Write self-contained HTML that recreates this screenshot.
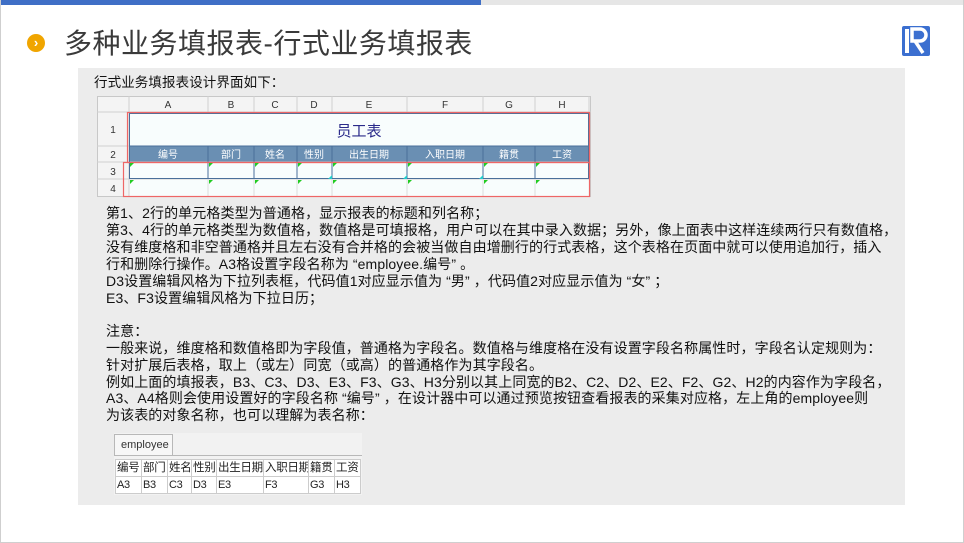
<!DOCTYPE html>
<html><head><meta charset="utf-8"><style>
*{margin:0;padding:0;box-sizing:border-box}
body{width:964px;height:543px;position:relative;background:#fff;overflow:hidden;font-family:"Liberation Sans","Noto Sans CJK SC",sans-serif}
.frame{position:absolute;left:0;top:0;width:964px;height:543px;border:1px solid #cfcfcf;border-top:none}
.topbar{position:absolute;left:0;top:0;width:964px;height:5px;background:#e6e6e6}
.topbar i{position:absolute;left:0;top:0;width:481px;height:5px;background:#3f6fc6}
.title{position:absolute;left:64px;top:22px;font-size:28px;color:#3a3a3a;white-space:nowrap;letter-spacing:0.5px}
.bullet{position:absolute;left:27px;top:34px;width:18px;height:18px;border-radius:50%;background:#f0a500;color:#fff;font-size:13px;font-weight:bold;text-align:center;line-height:18px}
.logo{position:absolute;left:902px;top:26px;width:28px;height:30px;background:#3b6fd0;border-radius:2px}
.panel{position:absolute;left:78px;top:68px;width:827px;height:437px;background:#ececec}
.t{position:absolute;white-space:nowrap;font-size:14px;color:#111;letter-spacing:0.1px;line-height:17px}
.sheet{position:absolute;left:97px;top:96px;width:494px;height:101px;background:#f4f4f4;border:1px solid #c8c8c8}
table{border-collapse:collapse;table-layout:fixed}
td{border:1px solid #ccc;white-space:nowrap;overflow:hidden;padding:0 1px;line-height:15px}
</style></head><body>
<div class="topbar"><i></i></div>
<div class="frame"></div>
<div class="bullet">›</div>
<div class="title">多种业务填报表-行式业务填报表</div>
<div class="logo"><svg width="28" height="30"><rect x="3" y="3" width="4" height="24" fill="#fff"/><path d="M10 3h8a6 6 0 0 1 0 12h-8zM13 15l8 12" fill="none" stroke="#fff" stroke-width="3.5"/></svg></div>
<div class="panel"></div>
<div class="t" style="left:94px;top:74px;font-size:13.5px">行式业务填报表设计界面如下：</div>

<div class="sheet"></div>
<svg style="position:absolute;left:97px;top:96px" width="495" height="102">
<g font-family="Liberation Sans" font-size="10" fill="#333" text-anchor="middle">
<rect x="32" y="16" width="460" height="34" fill="#f8fdfd"/>
<rect x="32" y="50" width="460" height="16" fill="#6a8fb3"/>
<rect x="32" y="66" width="460" height="34" fill="#f8fdfd"/>
<g stroke="#d0d0d0" stroke-width="1">
<line x1="32" y1="0" x2="32" y2="101"/><line x1="0" y1="16" x2="494" y2="16"/>
<line x1="0" y1="50" x2="32" y2="50"/><line x1="0" y1="66" x2="494" y2="66"/><line x1="0" y1="83" x2="494" y2="83"/>
<line x1="111" y1="0" x2="111" y2="16"/><line x1="157" y1="0" x2="157" y2="16"/><line x1="200" y1="0" x2="200" y2="16"/><line x1="235" y1="0" x2="235" y2="16"/><line x1="310" y1="0" x2="310" y2="16"/><line x1="386" y1="0" x2="386" y2="16"/><line x1="438" y1="0" x2="438" y2="16"/><line x1="492" y1="0" x2="492" y2="16"/>
</g>
<g stroke="#4a6f9a" stroke-width="1" fill="none">
<rect x="32.5" y="17.5" width="459" height="65"/>
<line x1="32" y1="50" x2="492" y2="50"/>
<line x1="111" y1="50" x2="111" y2="83"/><line x1="157" y1="50" x2="157" y2="83"/><line x1="200" y1="50" x2="200" y2="83"/><line x1="235" y1="50" x2="235" y2="83"/><line x1="310" y1="50" x2="310" y2="83"/><line x1="386" y1="50" x2="386" y2="83"/><line x1="438" y1="50" x2="438" y2="83"/>
</g>
<g stroke="#ddd"><line x1="111" y1="83" x2="111" y2="100"/><line x1="157" y1="83" x2="157" y2="100"/><line x1="200" y1="83" x2="200" y2="100"/><line x1="235" y1="83" x2="235" y2="100"/><line x1="310" y1="83" x2="310" y2="100"/><line x1="386" y1="83" x2="386" y2="100"/><line x1="438" y1="83" x2="438" y2="100"/></g>
<rect x="30.5" y="16.5" width="462" height="50" fill="none" stroke="#e66" stroke-width="1.2"/>
<rect x="26.5" y="66.5" width="466" height="34" fill="none" stroke="#e66" stroke-width="1.2"/>
<text x="71" y="12">A</text><text x="134" y="12">B</text><text x="178" y="12">C</text><text x="217" y="12">D</text><text x="272" y="12">E</text><text x="348" y="12">F</text><text x="412" y="12">G</text><text x="465" y="12">H</text>
<text x="16" y="37">1</text><text x="16" y="62">2</text><text x="16" y="79">3</text><text x="16" y="96">4</text>
<text x="262" y="40" font-size="15" fill="#2a2a8a" font-family="Noto Sans CJK SC">员工表</text>
<g fill="#fff" font-family="Noto Sans CJK SC" font-size="10">
<text x="71" y="62">编号</text><text x="134" y="62">部门</text><text x="178" y="62">姓名</text><text x="217" y="62">性别</text><text x="272" y="62">出生日期</text><text x="348" y="62">入职日期</text><text x="412" y="62">籍贯</text><text x="465" y="62">工资</text>
</g>
<g fill="#2c2">
<path d="M33 67h4l-4 4z"/><path d="M112 67h4l-4 4z"/><path d="M158 67h4l-4 4z"/><path d="M201 67h4l-4 4z"/><path d="M236 67h4l-4 4z"/><path d="M311 67h4l-4 4z"/><path d="M387 67h4l-4 4z"/><path d="M439 67h4l-4 4z"/>
<path d="M33 84h4l-4 4z"/><path d="M112 84h4l-4 4z"/><path d="M158 84h4l-4 4z"/><path d="M201 84h4l-4 4z"/><path d="M236 84h4l-4 4z"/><path d="M311 84h4l-4 4z"/><path d="M387 84h4l-4 4z"/><path d="M439 84h4l-4 4z"/>
</g>
<g fill="#2cc"><path d="M235 83v-4l-4 4z"/><path d="M310 83v-4l-4 4z"/><path d="M386 83v-4l-4 4z"/></g>
</g></svg>

<div class="t" style="left:106px;top:205px">第1、2行的单元格类型为普通格，显示报表的标题和列名称；</div>
<div class="t" style="left:106px;top:222px">第3、4行的单元格类型为数值格，数值格是可填报格，用户可以在其中录入数据；另外，像上面表中这样连续两行只有数值格，</div>
<div class="t" style="left:106px;top:239px">没有维度格和非空普通格并且左右没有合并格的会被当做自由增删行的行式表格，这个表格在页面中就可以使用追加行，插入</div>
<div class="t" style="left:106px;top:256px">行和删除行操作。A3格设置字段名称为 “employee.编号” 。</div>
<div class="t" style="left:106px;top:273px">D3设置编辑风格为下拉列表框，代码值1对应显示值为 “男” ，代码值2对应显示值为 “女” ；</div>
<div class="t" style="left:106px;top:290px">E3、F3设置编辑风格为下拉日历；</div>
<div class="t" style="left:106px;top:323px">注意：</div>
<div class="t" style="left:106px;top:340px">一般来说，维度格和数值格即为字段值，普通格为字段名。数值格与维度格在没有设置字段名称属性时，字段名认定规则为：</div>
<div class="t" style="left:106px;top:357px">针对扩展后表格，取上（或左）同宽（或高）的普通格作为其字段名。</div>
<div class="t" style="left:106px;top:374px">例如上面的填报表，B3、C3、D3、E3、F3、G3、H3分别以其上同宽的B2、C2、D2、E2、F2、G2、H2的内容作为字段名，</div>
<div class="t" style="left:106px;top:390px">A3、A4格则会使用设置好的字段名称 “编号” ，在设计器中可以通过预览按钮查看报表的采集对应格，左上角的employee则</div>
<div class="t" style="left:106px;top:407px">为该表的对象名称，也可以理解为表名称：</div>

<div style="position:absolute;left:114px;top:433px;width:248px;height:62px;background:#f2f2f2"></div>
<div style="position:absolute;left:114px;top:434px;width:59px;height:22px;background:#f7f7f7;border:1px solid #b8b8b8;border-bottom:none;font-size:11px;color:#333;padding:4px 0 0 6px;font-family:'Liberation Sans',sans-serif">employee</div>
<div style="position:absolute;left:114px;top:455px;width:248px;height:1px;background:#b8b8b8"></div>
<table style="position:absolute;left:115px;top:459px;width:245px;font-size:11.5px;color:#222;background:#fff;letter-spacing:-0.3px">
<colgroup><col style="width:26px"><col style="width:26px"><col style="width:24px"><col style="width:25px"><col style="width:47px"><col style="width:45px"><col style="width:26px"><col style="width:26px"></colgroup>
<tr style="height:17px"><td>编号</td><td>部门</td><td>姓名</td><td>性别</td><td>出生日期</td><td>入职日期</td><td>籍贯</td><td>工资</td></tr>
<tr style="height:17px;font-size:11px"><td>A3</td><td>B3</td><td>C3</td><td>D3</td><td>E3</td><td>F3</td><td>G3</td><td>H3</td></tr>
</table>
</body></html>
